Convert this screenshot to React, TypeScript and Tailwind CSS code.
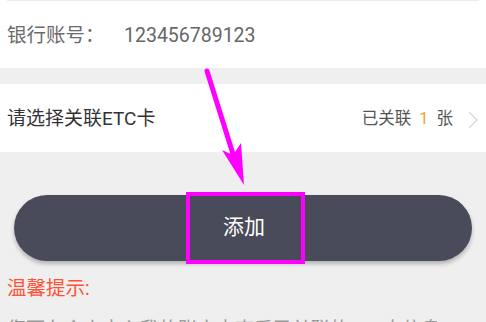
import React from 'react';

const font = { fontFamily: 'Roboto, "Noto Sans CJK SC", sans-serif' };

const App: React.FC = () => {
  return (
    <div className="relative min-h-screen w-full overflow-hidden bg-[#efefef]" style={font}>
      {/* account row */}
      <div className="bg-white">
        <div className="mx-[7px] h-px bg-[#ececec]" />
        <div className="flex h-[67px] items-center px-[7px] pt-[3px] text-[19.5px]">
          <span className="w-[117px] text-[#6b6b6b]">银行账号：</span>
          <span className="text-[#666666]">123456789123</span>
        </div>
      </div>

      <div className="h-[16px]" />

      {/* ETC card row */}
      <div className="flex h-[68px] items-center justify-between bg-white pl-[7px] pr-[7px] pt-[3px]">
        <span className="text-[19px] text-[#333333]">请选择关联ETC卡</span>
        <div className="flex items-center text-[16.5px] text-[#555555]">
          <span>已关联</span>
          <span className="mx-[8px] text-[#ff9a2e]">1</span>
          <span>张</span>
          <svg width="12" height="18" viewBox="0 0 12 18" className="ml-[14px]">
            <polyline points="2,1 10,9 2,17" fill="none" stroke="#dcdcdc" strokeWidth="1.6" />
          </svg>
        </div>
      </div>

      {/* add button */}
      <div className="px-[14px] pt-[43px]">
        <div className="relative flex h-[66px] items-center justify-center rounded-full bg-[#4a4b5a] shadow-[0_3px_4px_rgba(0,0,0,0.25)]">
          <span className="ml-[2px] text-[21px] text-white">添加</span>
          <div className="absolute left-[172px] top-[-3px] h-[72px] w-[119px] border-[4px] border-[#ff00ff]" />
        </div>
      </div>

      {/* tips */}
      <div className="px-[7px] pt-[15px]">
        <p className="text-[19.5px] leading-[26px] text-[#ff5236]">温馨提示:</p>
        <p className="mt-[16px] whitespace-nowrap text-[19px] leading-[24px] text-[#9a9a9a]">
          您可在个人中心我的账户中查看已关联的ETC卡信息
        </p>
      </div>

      {/* annotation arrow */}
      <svg className="pointer-events-none absolute left-0 top-0" width="486" height="322" viewBox="0 0 486 322">
        <line x1="207" y1="71" x2="233" y2="154" stroke="#ff00ff" strokeWidth="5" strokeLinecap="round" />
        <polygon points="244,185 222,150 233,155 241,143" fill="#ff00ff" />
      </svg>
    </div>
  );
};

export default App;
